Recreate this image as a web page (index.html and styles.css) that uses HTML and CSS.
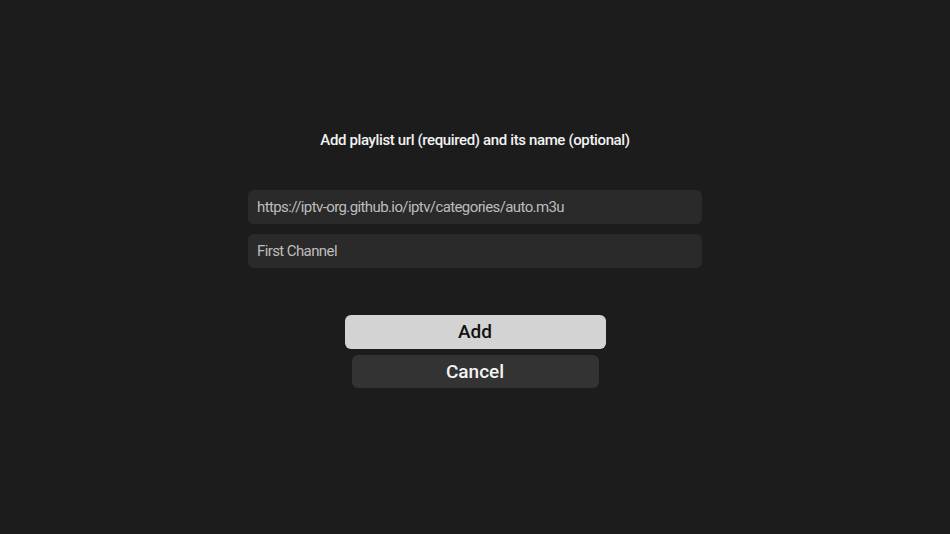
FILE: index.html
```html
<!DOCTYPE html>
<html>
<head>
<meta charset="utf-8">
<link rel="stylesheet" href="styles.css">
</head>
<body>
<main class="screen">
  <h1 class="title">Add playlist url (required) and its name (optional)</h1>
  <div class="fields">
    <div class="field">https://iptv-org.github.io/iptv/categories/auto.m3u</div>
    <div class="field">First Channel</div>
  </div>
  <div class="actions">
    <div class="btn btn-primary">Add</div>
    <div class="btn btn-secondary">Cancel</div>
  </div>
</main>
</body>
</html>
```
FILE: styles.css
```css
html, body {
  margin: 0;
  padding: 0;
  background: #1c1c1c;
}
.screen {
  width: 950px;
  height: 534px;
  display: flex;
  flex-direction: column;
  align-items: center;
  font-family: Roboto, "Noto Sans", sans-serif;
  box-sizing: border-box;
  padding-top: 131px;
}
.title {
  margin: 0;
  font-size: 15px;
  font-weight: 500;
  letter-spacing: -0.37px;
  color: #f2f2f2;
  line-height: 18px;
  height: 18px;
}
.fields {
  margin-top: 41px;
  width: 454px;
  display: flex;
  flex-direction: column;
  gap: 10px;
}
.field {
  height: 34px;
  background: #2a2a2a;
  border-radius: 6px;
  color: #bdbdbd;
  font-size: 15px;
  letter-spacing: -0.6px;
  line-height: 34px;
  padding-left: 9px;
}
.actions {
  margin-top: 47px;
  display: flex;
  flex-direction: column;
  align-items: center;
  gap: 6px;
}
.btn {
  height: 34px;
  line-height: 34px;
  text-align: center;
  border-radius: 6px;
  font-size: 19px;
  font-weight: 500;
}
.btn-primary {
  width: 261px;
  background: #d3d3d3;
  color: #111;
}
.btn-secondary {
  width: 247px;
  height: 33px;
  line-height: 33px;
  background: #333333;
  color: #f2f2f2;
}
```
